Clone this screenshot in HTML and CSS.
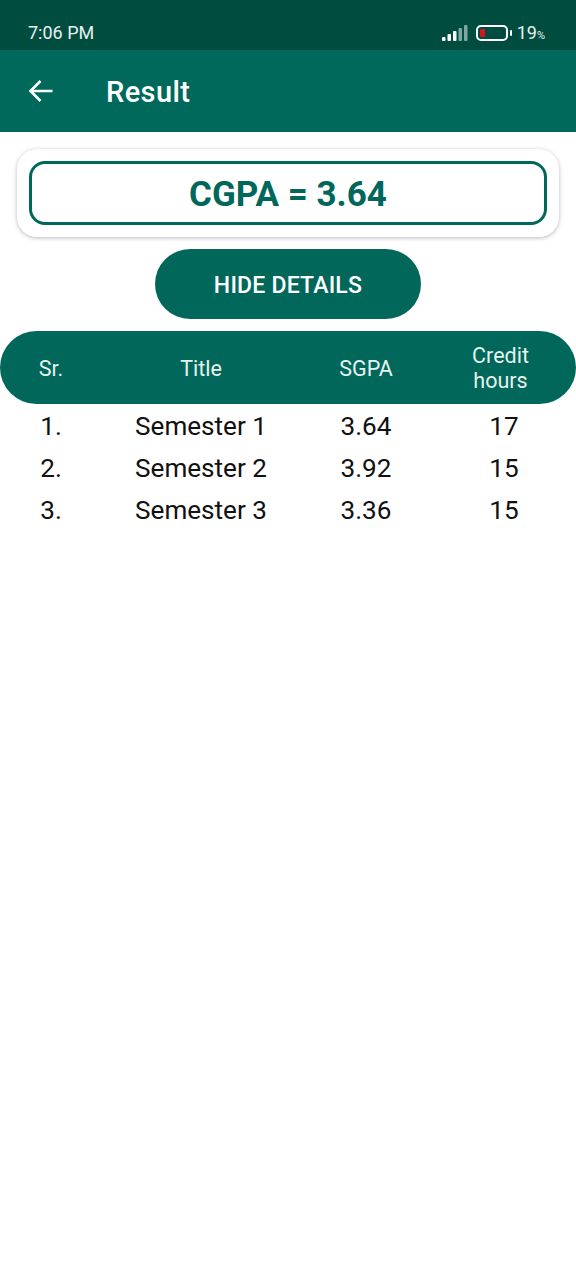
FILE: index.html
```html
<!DOCTYPE html>
<html lang="en">
<head>
  <meta charset="UTF-8" />
  <meta name="viewport" content="width=device-width, initial-scale=1.0"/>
  <title>Result</title>
  <link rel="stylesheet" href="styles.css">
</head>
<body>

  <!-- Status bar -->
  <div class="status-bar">
    <span class="time">7:06 PM</span>
    <div class="status-icons">
      <svg class="signal" width="26" height="16" viewBox="0 0 26 16">
        <rect x="0" y="12" width="3.5" height="4" rx="1" fill="#fff"/>
        <rect x="5.5" y="9" width="3.5" height="7" rx="1" fill="#fff"/>
        <rect x="11" y="6" width="3.5" height="10" rx="1" fill="#fff"/>
        <rect x="16.5" y="3" width="3.5" height="13" rx="1" fill="#7fa69f"/>
        <rect x="22" y="0" width="3.5" height="16" rx="1" fill="#7fa69f"/>
      </svg>
      <svg class="battery" width="36" height="16" viewBox="0 0 36 16">
        <rect x="1" y="1" width="30" height="14" rx="4" fill="none" stroke="#fff" stroke-width="2"/>
        <rect x="4" y="4" width="5" height="8" rx="1" fill="#d8141c"/>
        <rect x="34" y="5" width="2" height="6" rx="1" fill="#fff"/>
      </svg>
      <span class="level">19<small>%</small></span>
    </div>
  </div>

  <!-- App bar -->
  <header class="app-bar">
    <svg class="back" width="26" height="24" viewBox="0 0 26 24">
      <path d="M24.5 12H2.5M12.5 2 2.5 12l10 10" fill="none" stroke="#fff" stroke-width="2.6"/>
    </svg>
    <h1>Result</h1>
  </header>

  <div class="card">
    <div class="cgpa">CGPA = 3.64</div>
  </div>

  <button type="button" class="toggle">HIDE DETAILS</button>

  <div class="table-head row">
    <div>Sr.</div>
    <div>Title</div>
    <div>SGPA</div>
    <div class="credit">Credit<br>hours</div>
  </div>

  <div class="row item"><div>1.</div><div>Semester 1</div><div>3.64</div><div>17</div></div>
  <div class="row item"><div>2.</div><div>Semester 2</div><div>3.92</div><div>15</div></div>
  <div class="row item"><div>3.</div><div>Semester 3</div><div>3.36</div><div>15</div></div>

</body>
</html>
```

FILE: styles.css
```css
html, body {
  margin: 0;
  height: 1280px;
  overflow: hidden;
}
body {
  background-color: #fff;
  color: #111;
  font-family: Roboto, "Liberation Sans", sans-serif;
}
.status-bar {
  height: 50px;
  box-sizing: border-box;
  padding: 15px 31px 0 28px;
  background-color: #004d40;
  color: #e8f1ef;
  display: flex;
  align-items: center;
  justify-content: space-between;
}
.time {
  font-size: 18px;
}
.status-icons {
  display: flex;
  align-items: center;
}
.signal {
  margin-left: 1px;
  margin-right: 8px;
}
.battery {
  margin-right: 5px;
}
.level {
  font-size: 18px;
}
.level small {
  font-size: 11px;
}
.app-bar {
  height: 82px;
  background-color: #00695c;
  display: flex;
  align-items: center;
  padding-left: 28px;
  box-sizing: border-box;
}
.back {
  margin-bottom: 1px;
}
.app-bar h1 {
  margin: 2px 0 0 52px;
  color: #fff;
  font-size: 29px;
  font-weight: 500;
  letter-spacing: 0.4px;
}
.card {
  margin: 17px 17px 0;
  height: 88px;
  box-sizing: border-box;
  padding: 12px;
  background-color: #fff;
  border-radius: 20px;
  box-shadow: 0 1px 4px rgba(0, 0, 0, 0.28);
}
.cgpa {
  height: 64px;
  box-sizing: border-box;
  border: 3px solid #00675a;
  border-radius: 16px;
  padding-top: 2px;
  display: flex;
  align-items: center;
  justify-content: center;
  color: #00675a;
  font-size: 35px;
  font-weight: 700;
}
.toggle {
  display: block;
  width: 266px;
  height: 70px;
  margin: 12px auto 12px;
  padding: 2px 0 0;
  border: none;
  border-radius: 35px;
  background-color: #00675a;
  color: #fff;
  font-family: inherit;
  font-size: 23px;
  font-weight: 500;
  letter-spacing: 0.2px;
}
.row {
  display: grid;
  grid-template-columns: 102px 198px 132px 144px;
  align-items: center;
  text-align: center;
}
.table-head {
  height: 73px;
  box-sizing: border-box;
  padding-top: 1px;
  border-radius: 37px;
  background-color: #00675a;
  color: #e6f2ef;
  font-size: 21.5px;
  line-height: 25px;
  margin-bottom: 1px;
}
.credit {
  padding-right: 7px;
}
.item {
  height: 42px;
  font-size: 26.1px;
}
```
